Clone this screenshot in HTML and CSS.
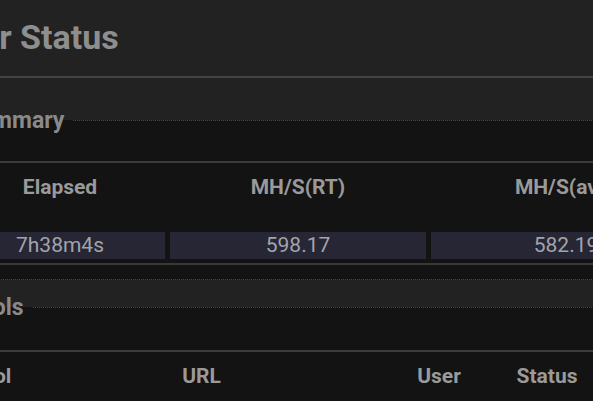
FILE: index.html
```html
<!DOCTYPE html>
<html lang="en">
<head>
<meta charset="utf-8">
<title>Miner Status</title>
<link rel="stylesheet" href="styles.css">
</head>
<body>
<div class="page">
  <h2 class="title">Miner Status</h2>

  <fieldset class="section">
    <legend class="legend">Summary</legend>
    <div class="table summary">
      <div class="row head">
        <div class="cell">Elapsed</div>
        <div class="cell">MH/S(RT)</div>
        <div class="cell">MH/S(avg)</div>
      </div>
      <div class="row data">
        <div class="cell">7h38m4s</div>
        <div class="cell">598.17</div>
        <div class="cell">582.19</div>
      </div>
    </div>
  </fieldset>

  <fieldset class="section pools-section">
    <legend class="legend">Pools</legend>
    <div class="table pools">
      <div class="row head">
        <div class="cell">Pool</div>
        <div class="cell">URL</div>
        <div class="cell">User</div>
        <div class="cell">Status</div>
      </div>
    </div>
  </fieldset>
</div>
</body>
</html>
```

FILE: styles.css
```css
html, body {
  margin: 0;
  padding: 0;
  background: #222222;
  overflow: hidden;
}

body {
  font-family: Roboto, "Liberation Sans", sans-serif;
  width: 593px;
  height: 401px;
}

.page {
  margin-left: -80px;
  width: 1100px;
}

.title {
  margin: 0;
  padding: 17px 0 19px 3px;
  font-size: 34px;
  line-height: 40px;
  font-weight: 700;
  color: #8e8e8e;
  border-bottom: 2px solid #434343;
}

.section {
  margin: 29px 0 0 34px;
  padding: 27px 0 14px 0;
  border: 1px dotted #4a4a4a;
  background: #131313;
  min-width: 0;
}

.pools-section {
  margin-top: 14px;
  padding-top: 29px;
}

.legend {
  margin-left: 2px;
  padding: 0 8px;
  font-size: 23px;
  line-height: 27px;
  font-weight: 700;
  color: #8a8a8a;
}

.row {
  display: grid;
}

.summary .row {
  grid-template-columns: 210px 256px 270px;
  column-gap: 5px;
}

.pools .row {
  grid-template-columns: 70px 353px 122px 94px;
}

.head {
  border-top: 2px solid #3c3c3c;
  padding: 12px 0 31px;
  font-size: 21px;
  line-height: 25px;
  font-weight: 700;
  color: #9a9a9a;
}

.cell {
  text-align: center;
  white-space: nowrap;
}

.data {
  margin-top: 1px;
  padding-bottom: 4px;
  border-bottom: 2px solid #383838;
  font-size: 21px;
  line-height: 27px;
  color: #a3a3ab;
}

.data .cell {
  background: #262634;
}
```
